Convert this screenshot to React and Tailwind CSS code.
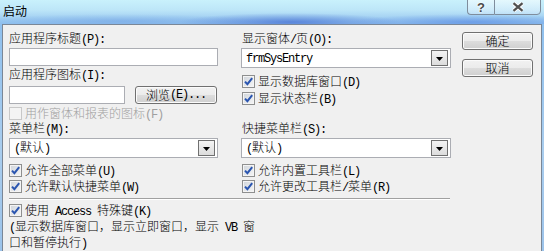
import React from 'react';

// Latin runs use a monospace face squeezed to the 6px half-width cell of the dialog font
const M = ({ children }) => (
  <span className="font-['Liberation_Mono',monospace] font-normal tracking-[-1.2px]">{children}</span>
);

const Check = ({ disabled = false }) => (
  <span
    className={
      disabled
        ? 'flex h-[13px] w-[13px] shrink-0 border border-[#c8c8c8] bg-[#f4f4f4]'
        : 'flex h-[13px] w-[13px] shrink-0 items-center justify-center border border-[#8e8f8f] bg-[linear-gradient(135deg,#cfd4da,#f6f6f6)] shadow-[inset_0_0_0_1px_#f4f4f4]'
    }
  >
    {!disabled && (
      <svg width="11" height="11" viewBox="0 0 11 11">
        <path d="M2 5.6 L4.4 8.2 L9.2 2.2" fill="none" stroke="#2a55b0" strokeWidth="2" />
      </svg>
    )}
  </span>
);

const CheckRow = ({ children, disabled = false, className = '' }) => (
  <div className={`flex h-[13px] items-center gap-[3px] ${className}`}>
    <Check disabled={disabled} />
    <span className={disabled ? 'whitespace-nowrap text-[#a0a0a0]' : 'whitespace-nowrap'}>{children}</span>
  </div>
);

const TextBox = ({ className = '' }) => (
  <div className={`h-[18px] border border-[#abadb3] bg-white ${className}`} />
);

const Combo = ({ children }) => (
  <div className="mt-[1px] flex h-[20px] items-center border border-[#abadb3] bg-white pl-[4px] pr-[2px]">
    <span className="flex-1 whitespace-nowrap">{children}</span>
    <span className="flex h-[16px] w-[17px] items-center justify-center border border-[#707070] bg-[linear-gradient(#f4f4f4,#dcdcdc)]">
      <svg width="7" height="4" viewBox="0 0 7 4" className="mt-[2px]">
        <path d="M0 0h7L3.5 4z" fill="#000" />
      </svg>
    </span>
  </div>
);

const Button = ({ children, className = '' }) => (
  <div
    className={`flex h-[18px] items-center justify-center rounded-[3px] border border-[#707070] bg-[linear-gradient(#f2f2f2,#ebebeb_50%,#dddddd_50%,#cfcfcf)] shadow-[inset_0_0_0_1px_#fbfbfb] ${className}`}
  >
    {children}
  </div>
);

const App = () => {
  return (
    <div className="flex h-[251px] w-[544px] flex-col overflow-hidden bg-[linear-gradient(180deg,#c9f1fc_0px,#bde6f8_10px,#8fc0ee_24px,#a9cdee_60%,#9cc3ea_100%)] font-['Noto_Sans_CJK_SC',sans-serif] text-[12px] font-light leading-[14px] text-black">
      {/* Title bar */}
      <div className="flex h-[24px] shrink-0 items-start justify-between bg-[radial-gradient(ellipse_110px_9px_at_290px_22px,rgba(40,80,200,0.55),transparent),radial-gradient(ellipse_120px_8px_at_470px_22px,rgba(60,110,220,0.45),transparent),radial-gradient(ellipse_140px_7px_at_120px_21px,rgba(90,140,220,0.35),transparent)]">
        <span className="ml-[3px] mt-[4px] font-normal">启动</span>
        <div className="mr-[3px] flex h-[16px] -mt-px">
          <div className="flex w-[27px] items-center justify-center rounded-bl-[4px] border border-r-0 border-[#7f8d9c] bg-[linear-gradient(rgba(255,255,255,0.5),rgba(220,235,250,0.35))]">
            <span className="font-['Liberation_Sans',sans-serif] text-[13px] font-bold leading-[13px] text-[#4a4a4a] [text-shadow:0_0_2px_#fff,0_0_2px_#fff]">?</span>
          </div>
          <div className="flex w-[47px] items-center justify-center rounded-br-[4px] border border-[#7f8d9c] bg-[linear-gradient(rgba(255,255,255,0.5),rgba(220,235,250,0.35))]">
            <svg width="12" height="10" viewBox="0 0 12 10">
              <path d="M1.5 1.2 L10.5 8.8 M10.5 1.2 L1.5 8.8" stroke="#fff" strokeWidth="4" />
              <path d="M1.5 1.2 L10.5 8.8 M10.5 1.2 L1.5 8.8" stroke="#505050" strokeWidth="2.2" />
            </svg>
          </div>
        </div>
      </div>

      {/* Dialog body */}
      <div className="mx-[2px] mb-[2px] flex-1 border border-[#7a8797] bg-[#f0f0f0] pl-[6px] pt-[6px]">
        {/* Top section */}
        <div className="flex h-[90px]">
          <div className="w-[209px]">
            <div>应用程序标题<M>(P):</M></div>
            <TextBox className="mt-[1px]" />
            <div className="mt-[1px]">应用程序图标<M>(I):</M></div>
            <div className="mt-[3px] flex">
              <TextBox className="w-[116px]" />
              <Button className="ml-[10px] w-[82px]">浏览<M>(E)...</M></Button>
            </div>
            <CheckRow disabled className="mt-[3px]">用作窗体和报表的图标<M>(F)</M></CheckRow>
          </div>

          <div className="ml-[23px] w-[210px]">
            <div className="pl-[1px]">显示窗体<M>/</M>页<M>(O):</M></div>
            <Combo><M>frmSysEntry</M></Combo>
            <CheckRow className="ml-[1px] mt-[7px]">显示数据库窗口<M>(D)</M></CheckRow>
            <CheckRow className="ml-[1px] mt-[4px]">显示状态栏<M>(B)</M></CheckRow>
          </div>

          <div className="ml-[11px] w-[71px]">
            <Button className="mt-[1px]">确定</Button>
            <Button className="mt-[9px]">取消</Button>
          </div>
        </div>

        {/* Menu bars */}
        <div className="flex">
          <div className="w-[209px]">
            <div>菜单栏<M>(M):</M></div>
            <Combo><M>(</M>默认<M>)</M></Combo>
            <CheckRow className="mt-[6px]">允许全部菜单<M>(U)</M></CheckRow>
            <CheckRow className="mt-[3px]">允许默认快捷菜单<M>(W)</M></CheckRow>
          </div>
          <div className="ml-[23px] w-[210px]">
            <div className="pl-[1px]">快捷菜单栏<M>(S):</M></div>
            <Combo><M>(</M>默认<M>)</M></Combo>
            <CheckRow className="ml-[1px] mt-[6px]">允许内置工具栏<M>(L)</M></CheckRow>
            <CheckRow className="ml-[1px] mt-[3px]">允许更改工具栏<M>/</M>菜单<M>(R)</M></CheckRow>
          </div>
        </div>

        <div className="mt-[5px] h-[2px] w-[441px] border-t border-b border-t-[#a0a0a0] border-b-white" />

        <CheckRow className="mt-[4px]">使用<M> Access </M>特殊键<M>(K)</M></CheckRow>
        <div className="mt-[2px] leading-[13px]">
          <div><M>(</M>显示数据库窗口，显示立即窗口，显示<M> VB </M>窗</div>
          <div>口和暂停执行<M>)</M></div>
        </div>
      </div>
    </div>
  );
};

export default App;
